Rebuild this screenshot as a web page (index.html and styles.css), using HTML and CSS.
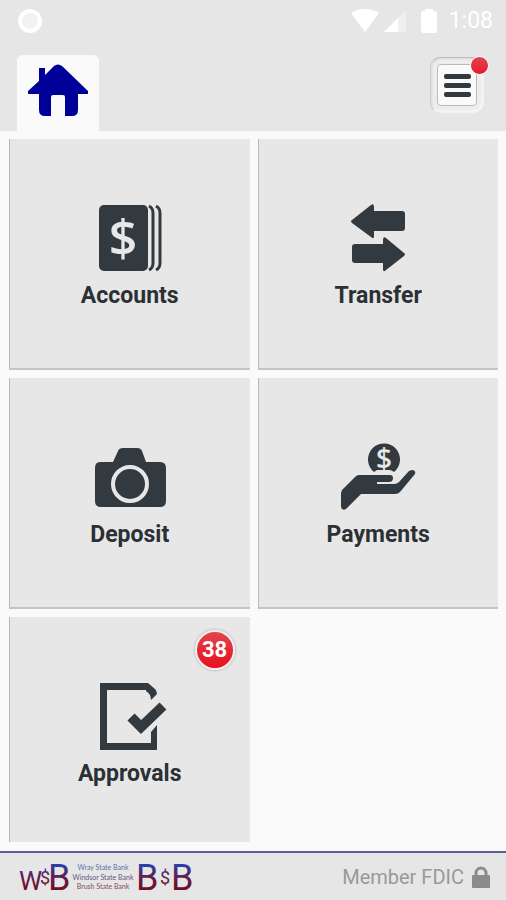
FILE: index.html
```html
<!DOCTYPE html>
<html lang="en">
<head>
    <meta charset="UTF-8">
    <meta name="viewport" content="width=device-width, initial-scale=1.0">
    <title>Mobile Banking</title>
    <link rel="stylesheet" href="styles.css">
</head>
<body>
    <header class="header">
        <div class="status-bar">
            <span class="status-dot"></span>
            <div class="status-icons">
                <svg width="28" height="23" viewBox="0 0 28 23" fill="#fff"><path d="M14 23L0 4Q14-4 28 4z"/></svg>
                <svg class="signal" width="22" height="22" viewBox="0 0 22 22"><path d="M0 22L22 0V22z" fill="#f0f0f0"/><path d="M0 22L14 8V22z" fill="#fff"/></svg>
                <svg class="battery" width="16" height="24" viewBox="0 0 16 24" fill="#fff"><path d="M4 2V0h8v2h2q2 0 2 2v18q0 2-2 2H2q-2 0-2-2V4q0-2 2-2z"/></svg>
                <span class="time">1:08</span>
            </div>
        </div>
        <nav class="nav-bar">
            <a class="home-tab" href="#" aria-label="Home">
                <svg width="60" height="52" viewBox="0 0 60 52" fill="#000099"><path d="M26 2Q30-1 34 2L60 27V30H50V46Q50 52 44 52H37V33Q37 31 35 31H25Q23 31 23 33V52H17Q11 52 11 46V30H0V27L11 17V4H17V11z"/></svg>
            </a>
            <button class="menu-button" type="button" aria-label="Menu">
                <span class="menu-face">
                    <span class="menu-line"></span>
                    <span class="menu-line"></span>
                    <span class="menu-line"></span>
                </span>
                <span class="menu-alert"></span>
            </button>
        </nav>
    </header>

    <main class="content">
        <div class="tiles">
            <a class="tile" href="#">
                <svg class="tile-icon" width="76" height="70" viewBox="0 0 76 70">
                    <rect x="7" y="2" width="49" height="66" rx="5" fill="#333a3f"/>
                    <path d="M57 3Q61 5 61 10V60Q61 65 57 67M64 3Q68 5 68 10V60Q68 65 64 67" fill="none" stroke="#333a3f" stroke-width="3"/>
                    <text class="dollar" x="31" y="53" font-size="50">$</text>
                </svg>
                <span class="tile-label">Accounts</span>
            </a>
            <a class="tile" href="#">
                <svg class="tile-icon" width="76" height="70" viewBox="0 0 76 70" fill="#333a3f">
                    <path d="M12 17L31 2Q34 0 34 4V8H62Q65 8 65 11V25Q65 28 62 28H34V33Q34 37 31 34L12 20Q10 18 12 17z"/>
                    <path d="M64 50L46 35Q43 33 43 37V41H15Q12 41 12 44V57Q12 60 15 60H43V66Q43 70 46 67L64 53Q66 51 64 50z"/>
                </svg>
                <span class="tile-label">Transfer</span>
            </a>
            <a class="tile" href="#">
                <svg class="tile-icon" width="76" height="70" viewBox="0 0 76 70" fill="#333a3f">
                    <path d="M8 20H21L26 9Q27 6 31 6H45Q49 6 50 9L54 20H68Q74 20 74 26V59Q74 65 68 65H9Q3 65 3 59V26Q3 20 8 20z"/>
                    <circle cx="38" cy="42" r="17" fill="none" stroke="#e7e7e7" stroke-width="4"/>
                </svg>
                <span class="tile-label">Deposit</span>
            </a>
            <a class="tile" href="#">
                <svg class="tile-icon" width="76" height="70" viewBox="0 0 76 70" fill="#333a3f">
                    <path d="M34 30A16 16 0 1 1 54 30Q52 28 49 28H37z"/>
                    <text class="dollar" x="44" y="27" font-size="28">$</text>
                    <path d="M19 33H50Q53 33 53 36Q53 40 49 40H37V42H54Q57 42 59 40L69 29Q71 28 73 28Q76 29 75 32L60 50Q58 52 55 52H21L8 65Q5 69 2 67Q1 66 1 64V51Q1 48 4 46L15 35Q17 33 19 33z"/>
                </svg>
                <span class="tile-label">Payments</span>
            </a>
            <a class="tile" href="#">
                <svg class="tile-icon" width="76" height="70" viewBox="0 0 76 70" fill="#333a3f">
                    <path d="M8 2H56L63 8Q65 10 65 13L59 19Q59 13 54 10V9H15V62H59V51L65 44V69H8z"/>
                    <path d="M39 36L49 46L71 25" fill="none" stroke="#333a3f" stroke-width="10"/>
                </svg>
                <span class="tile-label">Approvals</span>
                <span class="badge">38</span>
            </a>
        </div>
    </main>

    <footer class="footer">
        <svg class="bank-logo" width="178" height="46" viewBox="0 0 178 46" role="img" aria-label="Wray State Bank, Windsor State Bank, Brush State Bank">
            <defs>
                <linearGradient id="brand" gradientUnits="userSpaceOnUse" x1="0" y1="10" x2="0" y2="36">
                    <stop offset="0" stop-color="#2940b0"/>
                    <stop offset="0.5" stop-color="#602050"/>
                    <stop offset="1" stop-color="#700d20"/>
                </linearGradient>
            </defs>
            <g class="monogram" fill="url(#brand)">
                <text x="0" y="36" font-size="26">W</text>
                <text x="21" y="30">$</text>
                <text x="29" y="36" font-size="36">B</text>
                <text x="117" y="36" font-size="36">B</text>
                <text x="141" y="30">$</text>
                <text x="152" y="36" font-size="36">B</text>
            </g>
            <g class="bank-names">
                <text x="84" y="16" fill="#5b72ac">Wray State Bank</text>
                <text x="84" y="26" fill="#665582">Windsor State Bank</text>
                <text x="84" y="35" fill="#874c62">Brush State Bank</text>
            </g>
        </svg>
        <div class="fdic">
            <span>Member FDIC</span>
            <svg width="18" height="22" viewBox="0 0 18 22"><rect y="9" width="18" height="13" rx="1" fill="#8b8b8b"/><path d="M4 10V7a5 5 0 0 1 10 0V10" fill="none" stroke="#8b8b8b" stroke-width="3"/></svg>
        </div>
    </footer>
</body>
</html>
```
FILE: styles.css
```css
:root {
    --page-color: #fafafa;
    --bar-color: #e6e6e6;
    --tile-color: #e7e7e7;
    --dark-color: #2b3035;
}

* {
    box-sizing: border-box;
    margin: 0;
    padding: 0;
}

body {
    font-family: Roboto, 'Liberation Sans', sans-serif;
    background-color: var(--page-color);
    color: var(--dark-color);
    display: flex;
    flex-direction: column;
    height: 100vh;
}

svg {
    display: block;
}

.header {
    background-color: var(--bar-color);
}

.status-bar {
    display: flex;
    justify-content: space-between;
    align-items: center;
    height: 41px;
    padding: 0 13px 0 18px;
}

.status-dot {
    width: 24px;
    height: 24px;
    border: 4px solid #fff;
    border-radius: 50%;
    background-color: #f2f2f2;
}

.status-icons {
    display: flex;
    align-items: center;
}

.signal {
    margin-left: 5px;
}

.battery {
    margin: 0 12px 0 15px;
}

.time {
    color: #fff;
    font-size: 23px;
    line-height: 24px;
}

.nav-bar {
    display: flex;
    justify-content: space-between;
    align-items: flex-end;
    height: 90px;
    padding: 0 22px 0 17px;
}

.home-tab {
    display: flex;
    justify-content: center;
    width: 82px;
    height: 76px;
    padding-top: 9px;
    border-radius: 6px 6px 0 0;
    background-color: var(--page-color);
}

.menu-button {
    position: relative;
    width: 54px;
    height: 56px;
    margin-bottom: 18px;
    padding: 6px;
    border: 1px solid #f1f1f1;
    border-top-color: #bbb;
    border-left-color: #ccc;
    border-radius: 10px;
    background-color: #ededed;
    box-shadow: inset -1px -1px 3px #fafafa, inset 1px 1px 2px #d5d5d5;
    cursor: pointer;
}

.menu-face {
    display: flex;
    flex-direction: column;
    justify-content: center;
    align-items: center;
    gap: 4px;
    height: 100%;
    border: 1px solid #bbb;
    border-radius: 4px;
    background-color: #fafafa;
}

.menu-line {
    width: 27px;
    height: 5px;
    border-radius: 2px;
    background-color: #333a3f;
}

.menu-alert {
    position: absolute;
    top: -2px;
    right: -6px;
    width: 19px;
    height: 19px;
    border: 1px solid #fafafa;
    border-radius: 50%;
    background: linear-gradient(#e14450, #e61b2b);
}

.content {
    flex: 1;
    min-height: 0;
    padding: 8px 8px 9px 9px;
}

.tiles {
    display: grid;
    grid-template-columns: 1fr 1fr;
    grid-auto-rows: 231px;
    gap: 8px;
    height: 100%;
    overflow: hidden;
}

.tile {
    position: relative;
    display: flex;
    flex-direction: column;
    align-items: center;
    gap: 10px;
    padding-top: 64px;
    border-left: 1px solid #b8b8b8;
    border-bottom: 2px solid #c4c4c4;
    background-color: var(--tile-color);
    color: var(--dark-color);
    text-decoration: none;
}

.tile-label {
    font-size: 23px;
    font-weight: 700;
    line-height: 26px;
}

.dollar {
    fill: #e7e7e7;
    font-family: 'Open Sans', sans-serif;
    font-weight: 600;
    text-anchor: middle;
}

.badge {
    position: absolute;
    top: 13px;
    right: 15px;
    width: 40px;
    height: 40px;
    border: 2px solid #f3eeee;
    border-radius: 50%;
    background: linear-gradient(#e14450, #e8101c);
    box-shadow: 0 0 2px 1px #c4c4c4;
    color: #fff;
    font-size: 22px;
    font-weight: 700;
    line-height: 36px;
    text-align: center;
}

.footer {
    display: flex;
    justify-content: space-between;
    align-items: center;
    height: 49px;
    padding: 0 16px 0 19px;
    border-top: 2px solid #5c5c9c;
    background-color: var(--bar-color);
}

.monogram {
    font-size: 18px;
}

.bank-names {
    font-family: Lato, sans-serif;
    font-size: 7px;
    text-anchor: middle;
}

.fdic {
    display: flex;
    align-items: center;
    gap: 8px;
    color: #999;
    font-size: 20px;
    line-height: 24px;
}
```
